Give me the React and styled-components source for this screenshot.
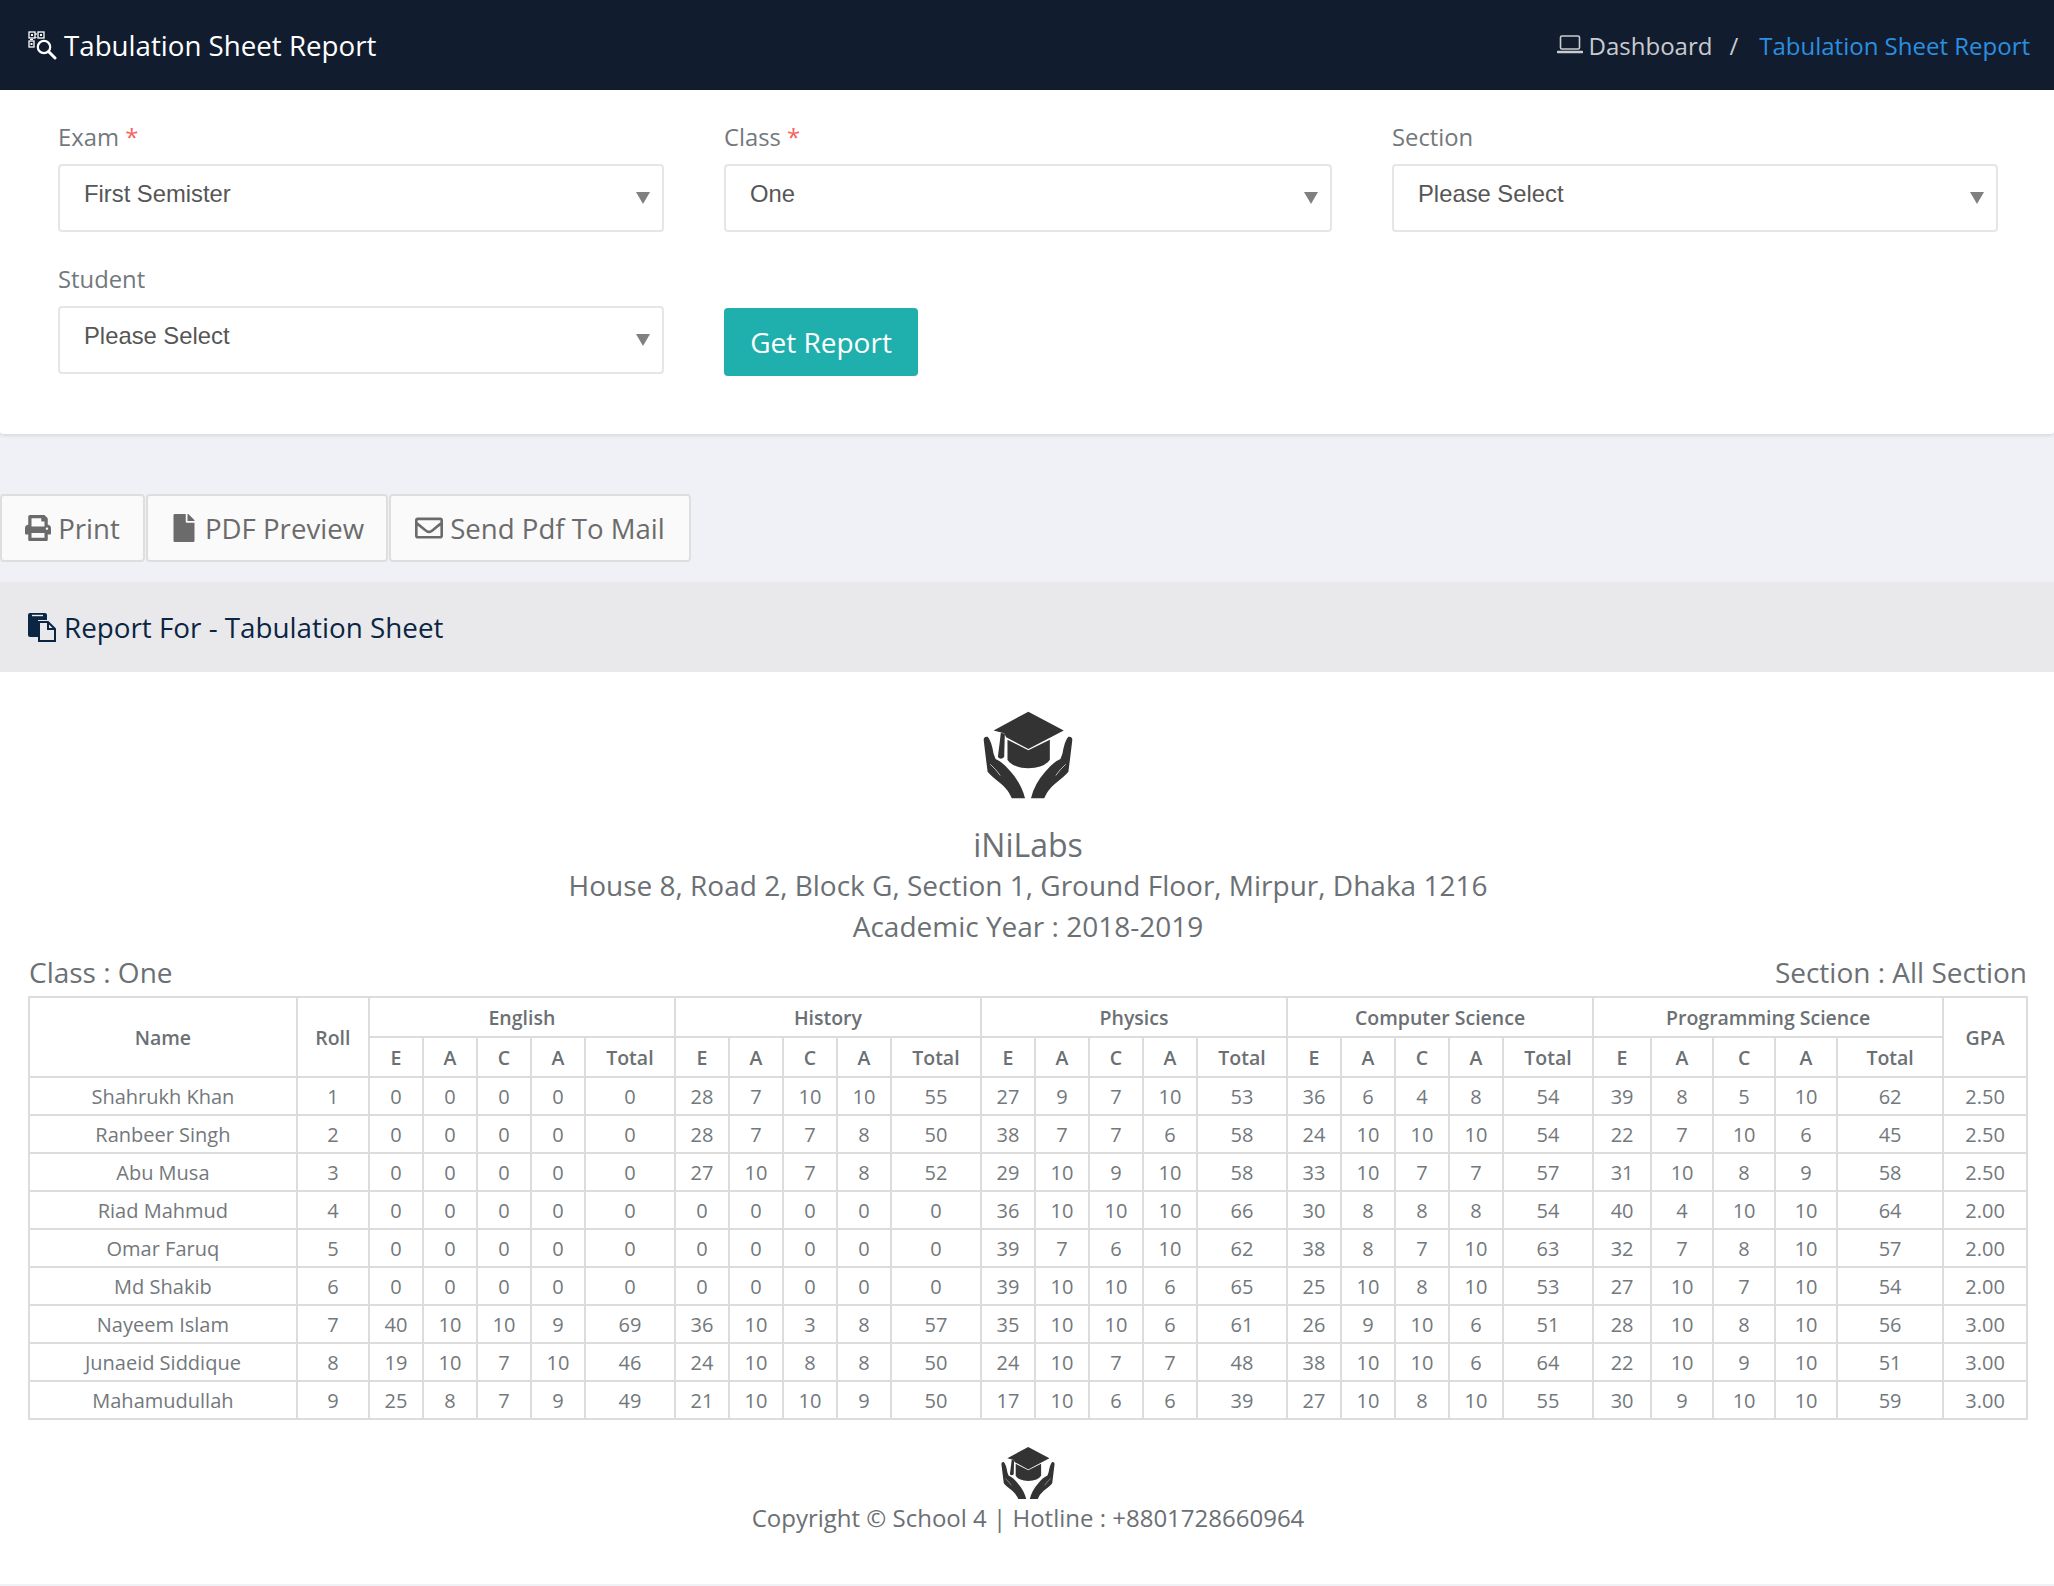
import React from 'react';
import styled, { createGlobalStyle } from 'styled-components';
import { FaPrint, FaFile, FaRegEnvelope } from 'react-icons/fa';

const GlobalStyle = createGlobalStyle`
    html, body {
        margin: 0;
        padding: 0;
        background: #eff1f6;
        font-family: "Open Sans", sans-serif;
        color: #6b7074;
    }
    * { box-sizing: border-box; }
`;

const Page = styled.div`
    width: 2054px;
    height: 1586px;
    overflow: hidden;
`;

const TopBar = styled.header`
    height: 90px;
    background: #111d2f;
    display: flex;
    align-items: center;
    justify-content: space-between;
    padding: 0 24px 0 28px;
`;
const PageTitle = styled.h1`
    margin: 0;
    font-size: 27.7px;
    font-weight: 400;
    color: #fff;
    display: flex;
    align-items: center;
    gap: 6px;
`;
const Crumbs = styled.div`
    display: flex;
    align-items: center;
    font-size: 24px;
    color: #c9cbcf;
`;
const LaptopSvg = styled.svg`
    margin-right: 6px;
`;
const CrumbSlash = styled.span`
    margin: 0 21px 0 17px;
`;
const CrumbActive = styled.span`
    color: #2b8fe0;
`;

const FormPanel = styled.section`
    height: 344px;
    background: #fff;
    box-shadow: 0 1px 4px rgba(0, 0, 0, 0.14);
    border-bottom-left-radius: 3px;
    border-bottom-right-radius: 3px;
    padding: 32px 0 0 58px;
    display: grid;
    grid-template-columns: 606px 608px 606px;
    column-gap: 60px;
    row-gap: 32px;
    align-content: start;
`;
const Field = styled.div`
    display: flex;
    flex-direction: column;
`;
const Label = styled.label`
    font-size: 23.8px;
    line-height: 30px;
    margin-bottom: 12px;
    color: #73787c;
`;
const Required = styled.span`
    color: #f4645f;
`;
const SelectBox = styled.div`
    position: relative;
    height: 68px;
    border: 2px solid #e4e7ea;
    border-radius: 4px;
    background: #fff;
    &::after {
        content: "";
        position: absolute;
        right: 12px;
        top: 26px;
        border-left: 7px solid transparent;
        border-right: 7px solid transparent;
        border-top: 12px solid #808080;
    }
`;
const Select = styled.select`
    appearance: none;
    width: 100%;
    height: 100%;
    border: 0;
    outline: 0;
    background: transparent;
    padding: 0 24px 10px 24px;
    font-family: "Liberation Sans", Arial, sans-serif;
    font-size: 23.8px;
    color: #565656;
`;
const SubmitCell = styled.div`
    padding-top: 44px;
`;
const SubmitButton = styled.button`
    width: 194px;
    height: 68px;
    border: 0;
    border-radius: 4px;
    background: #1fb0ad;
    color: #fff;
    font-family: "Open Sans", sans-serif;
    font-size: 28px;
`;

const ActionBar = styled.div`
    display: flex;
    gap: 1px;
    padding-top: 60px;
    height: 148px;
`;
const ActionButton = styled.button`
    height: 68px;
    width: ${p => p.$w}px;
    border: 2px solid #dedede;
    border-radius: 4px;
    background: #fafafa;
    color: #6b6b6b;
    font-family: "Open Sans", sans-serif;
    font-size: 27.6px;
    display: flex;
    align-items: center;
    justify-content: center;
    gap: 7px;
    padding: 0;
`;

const ReportHead = styled.div`
    height: 90px;
    background: #e9e9eb;
    display: flex;
    align-items: center;
    gap: 8px;
    padding-left: 28px;
    font-size: 27.8px;
    color: #0b2545;
`;

const ReportBody = styled.section`
    background: #fff;
    height: 912px;
    padding: 38px 0 0 2px;
    display: flex;
    flex-direction: column;
    align-items: center;
`;
const School = styled.div`
    margin-top: 24px;
    font-size: 32px;
    line-height: 41px;
`;
const InfoLine = styled.div`
    font-size: 28px;
    line-height: 41px;
`;
const MetaRow = styled.div`
    width: 1998px;
    display: flex;
    justify-content: space-between;
    font-size: 28px;
    line-height: 41px;
    margin-top: 5px;
    margin-bottom: 3px;
`;
const Table = styled.table`
    width: 1998px;
    table-layout: fixed;
    border-collapse: collapse;
    font-size: 20px;
`;
const Col = styled.col`
    width: ${p => p.$w}px;
`;
const Th = styled.th`
    height: 40px;
    padding: 0;
    border: 2px solid #dcdcdc;
    font-size: 19.5px;
    font-weight: 600;
    color: #6b7074;
    text-align: center;
`;
const Td = styled.td`
    height: 38px;
    padding: 0;
    border: 2px solid #dcdcdc;
    text-align: center;
    color: #73787c;
`;
const Footer = styled.div`
    margin-top: 26px;
    display: flex;
    flex-direction: column;
    align-items: center;
`;
const FooterText = styled.div`
    font-size: 24px;
    line-height: 34px;
    margin-top: 1px;
`;

const Logo = ({ width, height }) => {
    const hand = "M160 148 Q161 137 172 139 Q183 150 190 190 L196 206 Q218 215 242 245 Q275 282 285 325 L245 325 Q235 300 215 283 Q182 258 172 245 Q166 200 160 148 Z";
    return (
        <svg width={width} height={height} viewBox="158 60 272 268">
            <g fill="#333">
                <path d="M295 63 L402 120 L295 176 L228 140 L222 128 L190 120 Z" />
                <path d="M232 148 L295 180 L360 148 L360 208 Q345 232 295 234 Q245 232 232 208 Z" />
                <path d="M212 127 L224 130 L222 200 Q212 210 203 200 Z" />
                <path d={hand} />
                <path d={hand} transform="translate(588 0) scale(-1 1)" />
            </g>
            <path d="M180 222 Q198 238 210 256 M408 222 Q390 238 378 256" fill="none" stroke="#fff" strokeWidth="2" />
        </svg>
    );
};

const QrSearchIcon = () => (
    <svg width="30" height="30" viewBox="0 0 30 30" fill="none" stroke="#fff">
        <g strokeWidth="1.3">
            <rect x="1" y="2" width="6" height="6" />
            <rect x="10" y="2" width="6" height="6" />
            <rect x="1" y="11" width="5" height="6" />
        </g>
        <path d="M8 3v2M8 7v1M2 9.5h3" strokeWidth="1.2" />
        <g fill="#fff" stroke="none">
            <rect x="3" y="4" width="2" height="2" />
            <rect x="12" y="4" width="2" height="2" />
            <rect x="2.5" y="13" width="2" height="2" />
        </g>
        <circle cx="16" cy="17" r="6.2" strokeWidth="2.2" />
        <path d="M20.5 21.5 L27 28" strokeWidth="3" strokeLinecap="round" />
    </svg>
);

const LaptopIcon = () => (
    <LaptopSvg width="26" height="22" viewBox="0 0 26 22" fill="none" stroke="#c9cbcf">
        <rect x="3.5" y="2" width="19" height="13" rx="1.5" strokeWidth="1.6" />
        <path d="M1 18 H25" strokeWidth="2.6" strokeLinecap="round" />
    </LaptopSvg>
);

const PasteIcon = () => (
    <svg width="28" height="30" viewBox="0 0 28 30">
        <path d="M0 3 Q0 1 2 1 H17 Q19 1 19 3 V8 H10 V25 H2 Q0 25 0 23 Z" fill="#0b2545" />
        <path d="M4 3.5 H15" stroke="#e9e9eb" strokeWidth="1.4" />
        <path d="M11 10 H20 L27 17 V29 H11 Z" fill="#e9e9eb" stroke="#0b2545" strokeWidth="2" />
        <path d="M20 10 V17 H27" fill="none" stroke="#0b2545" strokeWidth="2" />
    </svg>
);

const subjects = ['English', 'History', 'Physics', 'Computer Science', 'Programming Science'];
const markCols = ['E', 'A', 'C', 'A', 'Total'];
const zero = [0, 0, 0, 0, 0];
const students = [
    ['Shahrukh Khan', 1, zero, [28, 7, 10, 10, 55], [27, 9, 7, 10, 53], [36, 6, 4, 8, 54], [39, 8, 5, 10, 62], '2.50'],
    ['Ranbeer Singh', 2, zero, [28, 7, 7, 8, 50], [38, 7, 7, 6, 58], [24, 10, 10, 10, 54], [22, 7, 10, 6, 45], '2.50'],
    ['Abu Musa', 3, zero, [27, 10, 7, 8, 52], [29, 10, 9, 10, 58], [33, 10, 7, 7, 57], [31, 10, 8, 9, 58], '2.50'],
    ['Riad Mahmud', 4, zero, zero, [36, 10, 10, 10, 66], [30, 8, 8, 8, 54], [40, 4, 10, 10, 64], '2.00'],
    ['Omar Faruq', 5, zero, zero, [39, 7, 6, 10, 62], [38, 8, 7, 10, 63], [32, 7, 8, 10, 57], '2.00'],
    ['Md Shakib', 6, zero, zero, [39, 10, 10, 6, 65], [25, 10, 8, 10, 53], [27, 10, 7, 10, 54], '2.00'],
    ['Nayeem Islam', 7, [40, 10, 10, 9, 69], [36, 10, 3, 8, 57], [35, 10, 10, 6, 61], [26, 9, 10, 6, 51], [28, 10, 8, 10, 56], '3.00'],
    ['Junaeid Siddique', 8, [19, 10, 7, 10, 46], [24, 10, 8, 8, 50], [24, 10, 7, 7, 48], [38, 10, 10, 6, 64], [22, 10, 9, 10, 51], '3.00'],
    ['Mahamudullah', 9, [25, 8, 7, 9, 49], [21, 10, 10, 9, 50], [17, 10, 6, 6, 39], [27, 10, 8, 10, 55], [30, 9, 10, 10, 59], '3.00'],
];
const colWidths = [
    268, 72,
    54, 54, 54, 54, 90,
    54, 54, 54, 54, 90,
    54, 54, 54, 54, 90,
    54, 54, 54, 54, 90,
    58, 62, 62, 62, 106,
    84,
];

const Dropdown = ({ label, required, value }) => (
    <Field>
        <Label>{label}{required && <> <Required>*</Required></>}</Label>
        <SelectBox>
            <Select defaultValue={value}>
                <option>{value}</option>
            </Select>
        </SelectBox>
    </Field>
);

const App = () => (
    <Page>
        <GlobalStyle />
        <TopBar>
            <PageTitle><QrSearchIcon /> Tabulation Sheet Report</PageTitle>
            <Crumbs>
                <LaptopIcon />
                Dashboard
                <CrumbSlash>/</CrumbSlash>
                <CrumbActive>Tabulation Sheet Report</CrumbActive>
            </Crumbs>
        </TopBar>
        <FormPanel>
            <Dropdown label="Exam" required value="First Semister" />
            <Dropdown label="Class" required value="One" />
            <Dropdown label="Section" value="Please Select" />
            <Dropdown label="Student" value="Please Select" />
            <SubmitCell>
                <SubmitButton>Get Report</SubmitButton>
            </SubmitCell>
        </FormPanel>
        <ActionBar>
            <ActionButton $w={145}><FaPrint size={26} /> Print</ActionButton>
            <ActionButton $w={242}><FaFile size={28} /> PDF Preview</ActionButton>
            <ActionButton $w={302}><FaRegEnvelope size={28} /> Send Pdf To Mail</ActionButton>
        </ActionBar>
        <ReportHead><PasteIcon /> Report For - Tabulation Sheet</ReportHead>
        <ReportBody>
            <Logo width={90} height={90} />
            <School>iNiLabs</School>
            <InfoLine>House 8, Road 2, Block G, Section 1, Ground Floor, Mirpur, Dhaka 1216</InfoLine>
            <InfoLine>Academic Year : 2018-2019</InfoLine>
            <MetaRow>
                <span>Class : One</span>
                <span>Section : All Section</span>
            </MetaRow>
            <Table>
                <colgroup>
                    {colWidths.map((w, i) => <Col key={i} $w={w} />)}
                </colgroup>
                <thead>
                    <tr>
                        <Th rowSpan={2}>Name</Th>
                        <Th rowSpan={2}>Roll</Th>
                        {subjects.map(s => <Th key={s} colSpan={5}>{s}</Th>)}
                        <Th rowSpan={2}>GPA</Th>
                    </tr>
                    <tr>
                        {subjects.map(s => markCols.map((m, i) => <Th key={s + i}>{m}</Th>))}
                    </tr>
                </thead>
                <tbody>
                    {students.map(([name, roll, ...rest]) => (
                        <tr key={name}>
                            <Td>{name}</Td>
                            <Td>{roll}</Td>
                            {rest.slice(0, 5).flat().map((v, i) => <Td key={i}>{v}</Td>)}
                            <Td>{rest[5]}</Td>
                        </tr>
                    ))}
                </tbody>
            </Table>
            <Footer>
                <Logo width={54} height={54} />
                <FooterText>Copyright © School 4 | Hotline : +8801728660964</FooterText>
            </Footer>
        </ReportBody>
    </Page>
);

export default App;
